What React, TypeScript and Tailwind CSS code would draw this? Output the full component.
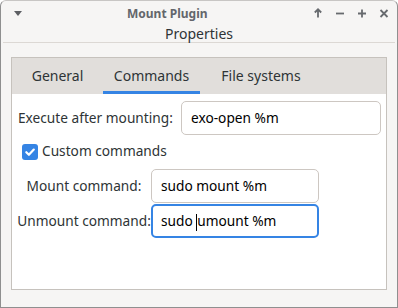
import React from 'react';

const font = { fontFamily: '"Noto Sans", "DejaVu Sans", sans-serif' };

const Entry: React.FC<{ value: string; width: string; focused?: boolean; caretAfter?: string }> = ({
  value,
  width,
  focused,
  caretAfter,
}) => {
  const border = focused
    ? 'border-2 border-[#3584e4] pl-[8px]'
    : 'border border-[#cdc7c2] pl-[9px]';
  return (
    <div className={`${width} h-[34px] shrink-0 rounded-[5px] bg-white flex items-center text-[#000] ${border}`}>
      {caretAfter !== undefined ? (
        <span className="whitespace-pre">
          {caretAfter}
          <span className="inline-block w-px h-[17px] bg-black align-middle" />
          {value.slice(caretAfter.length)}
        </span>
      ) : (
        <span className="whitespace-pre">{value}</span>
      )}
    </div>
  );
};

export default function App() {
  return (
    <div
      className="w-[398px] h-[308px] bg-[#f6f5f4] border border-[#8f8f8f] border-t-[#c8c6c4] rounded-t-[6px] flex flex-col text-[14px] text-[#2e3436]"
      style={font}
    >
      {/* header bar */}
      <div className="h-[42px] flex flex-col border-b border-[#dcd8d4] mx-[2px]">
        <div className="h-[26px] flex items-center relative">
          <svg className="absolute left-[11px] top-[10px]" width="8" height="5" viewBox="0 0 8 5">
            <path d="M0 0h8L4 5z" fill="#5d5f63" />
          </svg>
          <div className="absolute left-[124px] top-[4px] text-[12px] font-bold text-[#63666b]">Mount Plugin</div>
          <div className="absolute left-[309px] top-[6px] flex items-center gap-[10px] text-[#676a6e]">
            <svg width="12" height="12" viewBox="0 0 12 12">
              <path d="M6 10.5V2.5M2.8 5.5L6 2.3l3.2 3.2" stroke="#676a6e" strokeWidth="1.8" fill="none" />
            </svg>
            <svg width="12" height="12" viewBox="0 0 12 12">
              <path d="M2 6.5h8" stroke="#676a6e" strokeWidth="1.8" />
            </svg>
            <svg width="12" height="12" viewBox="0 0 12 12">
              <path d="M2 6.5h8M6 2.5v8" stroke="#676a6e" strokeWidth="1.8" />
            </svg>
            <svg width="12" height="12" viewBox="0 0 12 12">
              <path d="M2.5 3l7 7M9.5 3l-7 7" stroke="#676a6e" strokeWidth="1.8" />
            </svg>
          </div>
        </div>
        <div className="flex-1 flex items-start justify-center text-[14px] leading-[16px] text-[#2e3436]">
          Properties
        </div>
      </div>

      {/* notebook */}
      <div className="ml-[10px] mt-[14px] w-[376px] h-[233px] border border-[#c6c2bd] bg-white flex flex-col">
        <div className="h-[36px] bg-[#e1dedb] flex text-[#2e3436]">
          <div className="w-[91px] flex items-center justify-center pb-[1px]">General</div>
          <div className="w-[97px] flex flex-col">
            <div className="flex-1 flex items-center justify-center pt-[2px]">Commands</div>
            <div className="h-[3px] bg-[#3584e4]" />
          </div>
          <div className="w-[122px] flex items-center justify-center pb-[1px]">File systems</div>
        </div>

        <div className="flex flex-col pt-[7px] pl-[5px] whitespace-nowrap text-[13.7px]">
          <div className="flex items-center">
            <div className="w-[164px] pl-[1px]">Execute after mounting:</div>
            <Entry value="exo-open %m" width="w-[200px]" />
          </div>

          <div className="flex items-center mt-[8px] h-[17px] pl-[5px]">
            <div className="w-[16px] h-[16px] rounded-[3px] bg-[#3584e4] flex items-center justify-center">
              <svg width="12" height="12" viewBox="0 0 12 12">
                <path d="M2.3 6.2l2.6 2.6 4.9-5.2" stroke="white" strokeWidth="2.2" fill="none" strokeLinecap="round" strokeLinejoin="round" />
              </svg>
            </div>
            <span className="ml-[4px]">Custom commands</span>
          </div>

          <div className="flex items-center mt-[9px]">
            <div className="w-[134px] flex justify-center">Mount command:</div>
            <Entry value="sudo mount %m" width="w-[168px]" />
          </div>

          <div className="flex items-center mt-[1px]">
            <div className="w-[134px] flex justify-center">Unmount command:</div>
            <Entry value="sudo umount %m" width="w-[168px]" focused caretAfter="sudo " />
          </div>
        </div>
      </div>
    </div>
  );
}
